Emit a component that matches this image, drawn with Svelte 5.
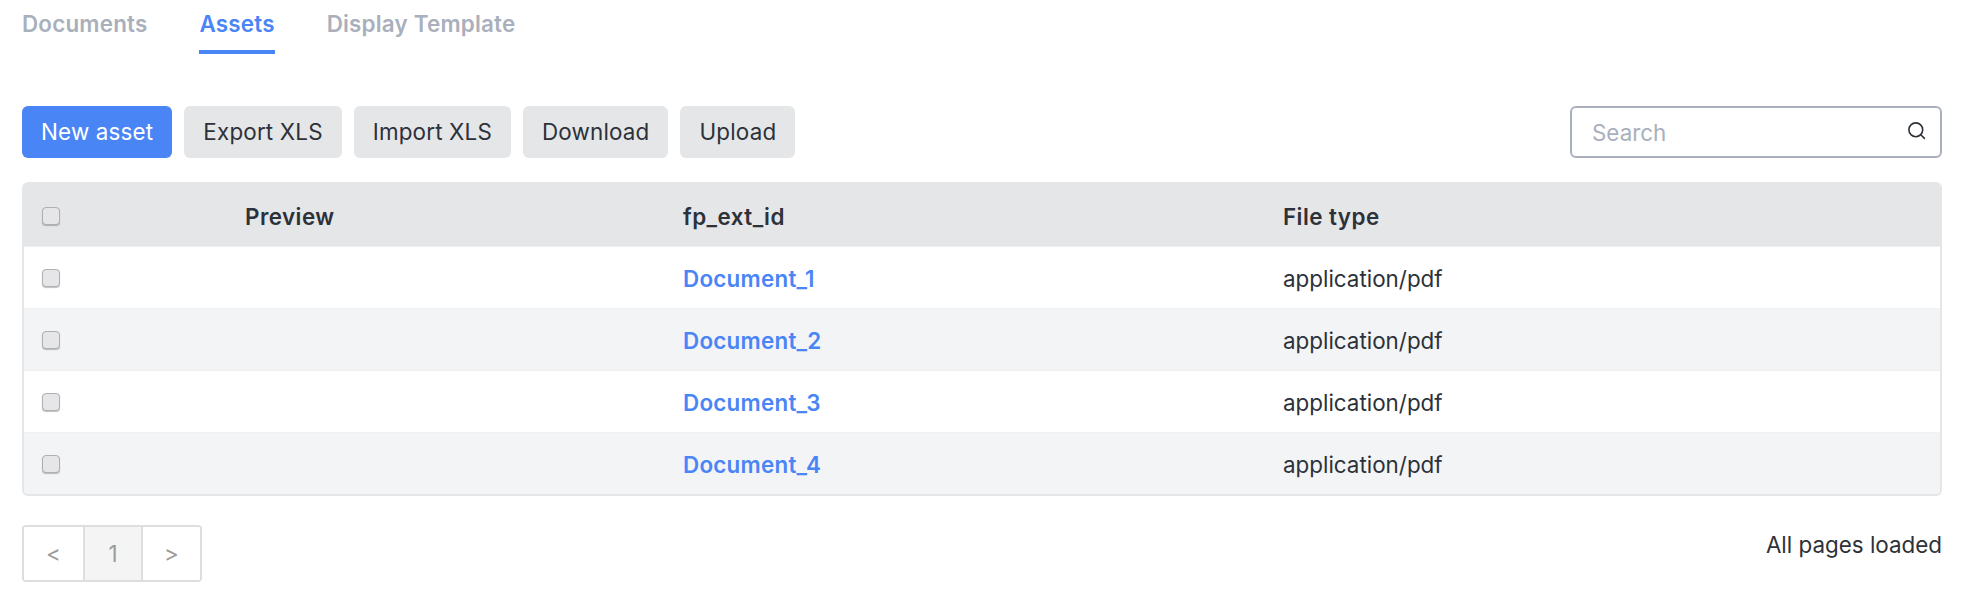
<script>
  let tabs = ['Documents', 'Assets', 'Display Template'];
  let activeTab = 'Assets';
  let actions = ['Export XLS', 'Import XLS', 'Download', 'Upload'];
  let rows = [1, 2, 3, 4].map((n) => ({ id: `Document_${n}`, type: 'application/pdf' }));
</script>

<div class="page">
  <nav class="tabs">
    {#each tabs as tab}
      <button class="tab" class:active={tab === activeTab} on:click={() => (activeTab = tab)}>{tab}</button>
    {/each}
  </nav>

  <div class="toolbar">
    <button class="btn btn-primary">New asset</button>
    {#each actions as action}
      <button class="btn">{action}</button>
    {/each}
    <div class="search">
      <input type="text" placeholder="Search" />
      <svg width="20" height="20" viewBox="0 0 20 20" fill="none" stroke="#2d3139" stroke-width="1.6" stroke-linecap="round">
        <circle cx="8.8" cy="8.8" r="6.9" />
        <path d="M13.8 13.8 L17.4 17.4" />
      </svg>
    </div>
  </div>

  <div class="table">
    <div class="row head">
      <div><input class="check" type="checkbox" /></div>
      <div>Preview</div>
      <div>fp_ext_id</div>
      <div>File type</div>
    </div>
    {#each rows as row, i}
      <div class="row" class:odd={i % 2 === 1}>
        <div><input class="check" type="checkbox" /></div>
        <div></div>
        <div><a href="#top" class="link">{row.id}</a></div>
        <div>{row.type}</div>
      </div>
    {/each}
  </div>

  <div class="footer">
    <div class="pager">
      <button class="page-btn">&lt;</button>
      <button class="page-btn current">1</button>
      <button class="page-btn">&gt;</button>
    </div>
    <span class="status">All pages loaded</span>
  </div>
</div>

<style>
  :global(body) {
    margin: 0;
    background: #ffffff;
    font-family: Inter, "Liberation Sans", sans-serif;
    color: #2d3139;
  }
  .page {
    padding: 0 42px 0 22px;
    font-size: 22.4px;
  }
  .tabs {
    display: flex;
    gap: 52px;
    height: 54px;
  }
  .tab {
    background: none;
    border: none;
    border-bottom: 4px solid transparent;
    padding: 0 0 3px;
    height: 54px;
    font: inherit;
    font-weight: 600;
    letter-spacing: 0.2px;
    color: #a9b0bc;
    cursor: pointer;
  }
  .tab.active {
    color: #4a85f6;
    border-bottom-color: #4a85f6;
  }
  .toolbar {
    display: flex;
    gap: 12px;
    margin-top: 52px;
    align-items: center;
  }
  .btn {
    height: 52px;
    padding: 0 19px 2px;
    border: none;
    border-radius: 6px;
    background: #e5e6e8;
    color: #2d3139;
    font: inherit;
    letter-spacing: 0.18px;
    cursor: pointer;
  }
  .btn-primary {
    background: #4a85f6;
    color: #ffffff;
  }
  .search {
    margin-left: auto;
    width: 372px;
    height: 52px;
    box-sizing: border-box;
    border: 2px solid #a9b0bc;
    border-radius: 6px;
    display: flex;
    align-items: center;
    padding: 0 13px 0 20px;
  }
  .search svg {
    margin-top: -3px;
  }
  .search input {
    flex: 1;
    min-width: 0;
    border: none;
    outline: none;
    padding: 0;
    font: inherit;
    color: #2d3139;
  }
  .search input::placeholder {
    color: #a9b0bc;
    opacity: 1;
  }
  .table {
    margin-top: 24px;
    border-radius: 6px;
    border: 2px solid #e5e6e8;
    border-top: none;
    overflow: hidden;
  }
  .row {
    display: grid;
    grid-template-columns: 221px 438px 600px 1fr;
    align-items: center;
    height: 62px;
    padding-top: 1px;
    border-top: 1px solid #eef0f2;
    box-sizing: border-box;
  }
  .row.head {
    height: 64px;
    margin: 0 -2px;
    padding: 4px 0 0 2px;
    border-top: none;
    background: #e5e6e8;
    font-weight: 600;
    letter-spacing: 0.45px;
  }
  .row.odd {
    background: #f3f4f6;
  }
  .check {
    appearance: none;
    display: block;
    width: 18px;
    height: 18px;
    margin: 0 0 0 18px;
    box-sizing: border-box;
    border: 1px solid #aeb0b4;
    border-radius: 4px;
    background: #e6e6e8;
    box-shadow: 0 1px 1px rgba(0, 0, 0, 0.25);
  }
  .link {
    color: #4a85f6;
    font-weight: 600;
    letter-spacing: 0.25px;
    text-decoration: none;
  }
  .footer {
    display: flex;
    justify-content: space-between;
    align-items: flex-start;
    margin-top: 29px;
  }
  .pager {
    display: flex;
    box-sizing: border-box;
    height: 57px;
    border: 2px solid #dedede;
    border-radius: 4px;
    overflow: hidden;
  }
  .page-btn {
    width: 58px;
    border: none;
    border-left: 2px solid #dedede;
    background: #ffffff;
    color: #9a9a9a;
    font: inherit;
    padding: 0;
    cursor: pointer;
  }
  .page-btn:first-child {
    width: 59px;
    border-left: none;
  }
  .page-btn:last-child {
    width: 59px;
  }
  .page-btn.current {
    background: #f4f4f5;
  }
  .status {
    margin-top: 6px;
  }
</style>
